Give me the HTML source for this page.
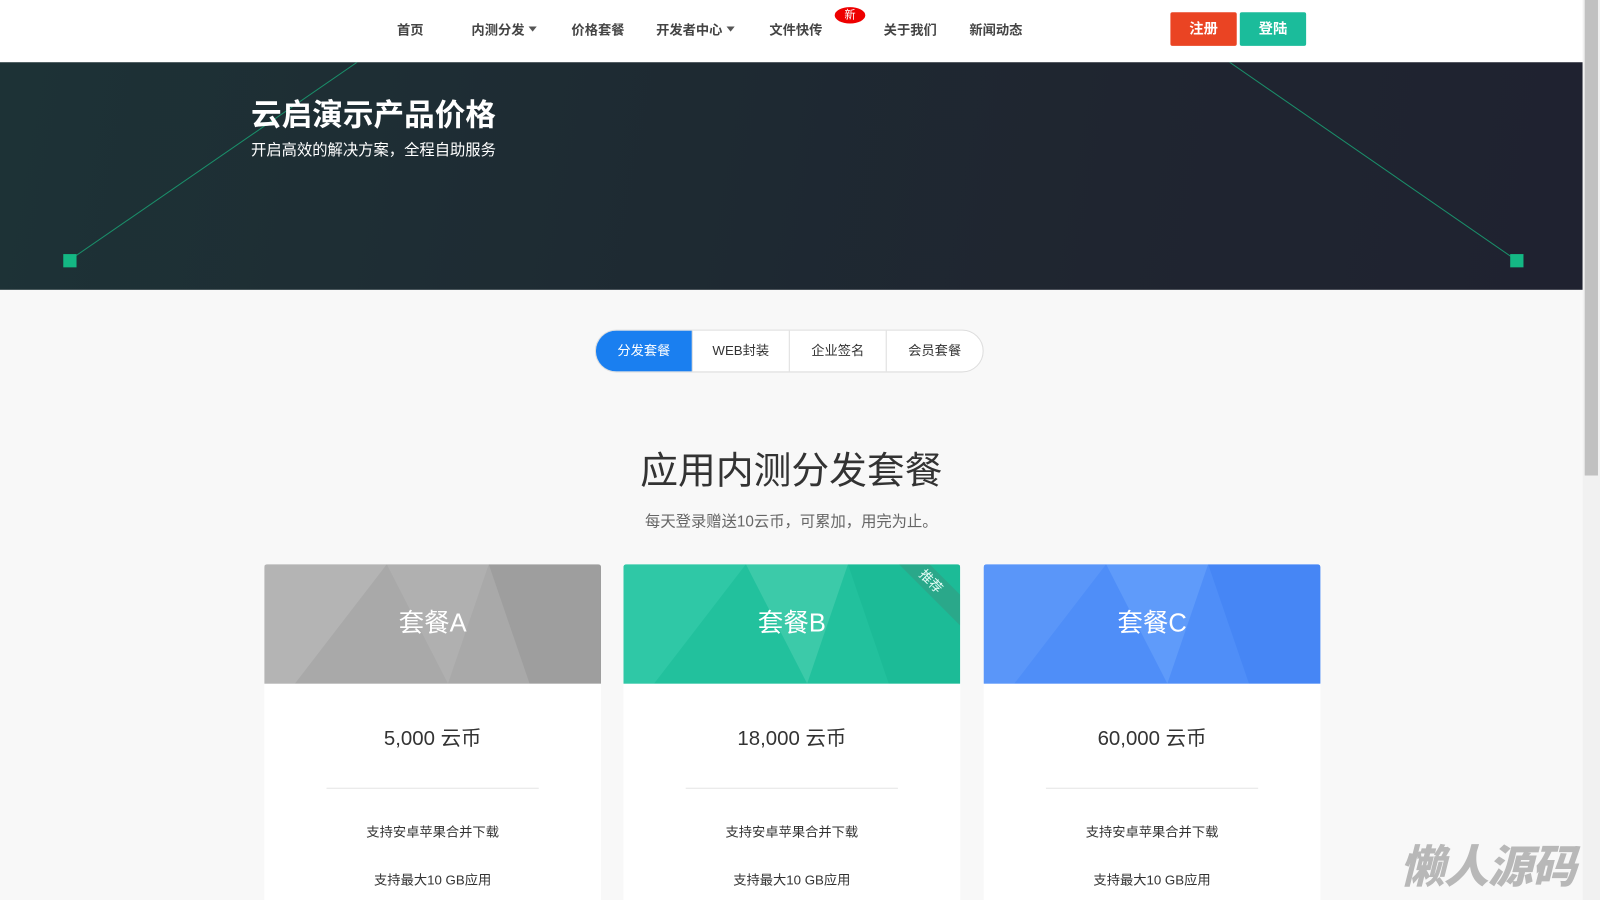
<!DOCTYPE html>
<html><head><meta charset="utf-8"><style>
*{margin:0;padding:0;box-sizing:border-box}
html,body{width:1600px;height:900px;overflow:hidden;background:#f8f8f8}
#w{position:absolute;left:0;top:0;width:1568px;height:882px;transform:scale(1.020408);transform-origin:0 0;font-family:"Liberation Sans","Noto Sans CJK SC",sans-serif;overflow:hidden}
.nav{position:absolute;left:0;top:0;width:1551px;height:61px;background:#fff}
.nav a{position:absolute;top:19px;font-size:13px;color:#444;font-weight:bold;text-decoration:none}
.tri{display:inline-block;border-left:4px solid transparent;border-right:4px solid transparent;border-top:5px solid #555;vertical-align:3px;margin-left:4px}
.new{position:absolute;left:818px;top:7px;width:30px;height:16px;border-radius:50%;background:#e00;color:#fff;font-size:11px;text-align:center;line-height:16px}
.btn{position:absolute;top:12px;height:33px;width:65px;color:#fff;font-size:14px;font-weight:bold;text-align:center;line-height:33px;border-radius:2px}
.hero{position:absolute;left:0;top:61px;width:1551px;height:223px;background:linear-gradient(100deg,#1d3236,#1f2530 70%,#1f2230);overflow:hidden}
.hero h1{position:absolute;left:246px;top:27px;color:#fff;font-size:30px;font-weight:bold}
.hero p{position:absolute;left:246px;top:75px;color:#fff;font-size:15px}
.tabs{position:absolute;left:583px;top:323px;width:381px;height:42px;border:1px solid #ddd;border-radius:21px;background:#fff;display:flex;overflow:hidden}
.tabs div{flex:1;text-align:center;line-height:40px;font-size:13px;color:#333;border-left:1px solid #ddd}
.tabs div:first-child{background:#1a7ff0;color:#fff;border:none}
h2{position:absolute;left:0;width:1551px;top:431px;text-align:center;font-size:37px;font-weight:normal;color:#333}
.sub{position:absolute;left:0;width:1551px;top:500px;text-align:center;font-size:15px;color:#666}
.card{position:absolute;top:553px;width:330px;height:347px;background:#fff;border-radius:3px;overflow:hidden}
.ch{height:117px;position:relative;overflow:hidden;color:#fff;font-size:25px;text-align:center;line-height:117px}
.ch svg{position:absolute;left:0;top:0}
.ch span{position:relative}
.price{text-align:center;font-size:20px;color:#333;margin-top:37px}
.hr{width:208px;height:1px;background:#e5e5e5;margin:36px auto 0}
.f{text-align:center;font-size:13px;color:#333}
.wm{position:absolute;left:1372px;top:814px;font-size:44px;font-weight:900;font-style:italic;color:#b8b8b8;letter-spacing:-1px}
.sb{position:absolute;left:1551px;top:0;width:17px;height:900px;background:#f1f1f1}
.th{position:absolute;left:1553px;top:0;width:13px;height:466px;background:#c1c1c1}
</style></head><body><div id="w">
<div class="nav">
<a style="left:389px">首页</a>
<a style="left:462px">内测分发<span class="tri"></span></a>
<a style="left:560px">价格套餐</a>
<a style="left:643px">开发者中心<span class="tri"></span></a>
<a style="left:754px">文件快传</a>
<div class="new">新</div>
<a style="left:866px">关于我们</a>
<a style="left:950px">新闻动态</a>
<div class="btn" style="left:1147px;background:#ea4423">注册</div>
<div class="btn" style="left:1215px;background:#1bbc9b">登陆</div>
</div>
<div class="hero">
<svg width="1551" height="223" style="position:absolute;left:0;top:0">
<line x1="68" y1="194" x2="350" y2="0" stroke="#1a8f6a" stroke-width="1"/>
<line x1="1486" y1="194" x2="1205" y2="0" stroke="#1a8f6a" stroke-width="1"/>
<rect x="62" y="188" width="13" height="13" fill="#14b884"/>
<rect x="1480" y="188" width="13" height="13" fill="#14b884"/>
</svg>
<h1>云启演示产品价格</h1>
<p>开启高效的解决方案，全程自助服务</p>
</div>
<div class="tabs"><div>分发套餐</div><div>WEB封装</div><div>企业签名</div><div>会员套餐</div></div>
<h2>应用内测分发套餐</h2>
<div class="sub">每天登录赠送10云币，可累加，用完为止。</div>

<div class="card" style="left:259px"><div class="ch" style="background:#a9a9a9">
<svg width="330" height="117"><polygon points="0,0 120,0 30,117 0,117" fill="#b4b4b4"/><polygon points="220,0 330,0 330,117 260,117" fill="#9e9e9e"/><polygon points="120,0 220,0 180,117" fill="#b0b0b0"/></svg><span>套餐A</span></div>
<div class="price">5,000 云币</div><div class="hr"></div>
<div class="f" style="margin-top:32px">支持安卓苹果合并下载</div><div class="f" style="margin-top:28px">支持最大10 GB应用</div></div>

<div class="card" style="left:611px"><div class="ch" style="background:#22c19d">
<svg width="330" height="117"><polygon points="0,0 120,0 30,117 0,117" fill="#2fc8a6"/><polygon points="220,0 330,0 330,117 260,117" fill="#1cbb97"/><polygon points="120,0 220,0 180,117" fill="#3ccaa9"/><polygon points="270,0 300,0 330,30 330,60" fill="#2aa88a"/></svg><span>套餐B</span>
<div style="position:absolute;left:288px;top:10px;font-size:13px;line-height:14px;transform:rotate(45deg);color:#e8fff8">推荐</div></div>
<div class="price">18,000 云币</div><div class="hr"></div>
<div class="f" style="margin-top:32px">支持安卓苹果合并下载</div><div class="f" style="margin-top:28px">支持最大10 GB应用</div></div>

<div class="card" style="left:964px"><div class="ch" style="background:#4f8ef8">
<svg width="330" height="117"><polygon points="0,0 120,0 30,117 0,117" fill="#5a96f9"/><polygon points="220,0 330,0 330,117 260,117" fill="#4686f5"/><polygon points="120,0 220,0 180,117" fill="#5f9bfa"/></svg><span>套餐C</span></div>
<div class="price">60,000 云币</div><div class="hr"></div>
<div class="f" style="margin-top:32px">支持安卓苹果合并下载</div><div class="f" style="margin-top:28px">支持最大10 GB应用</div></div>

<div class="wm">懒人源码</div>
<div class="sb"></div><div class="th"></div>
</div></body></html>
